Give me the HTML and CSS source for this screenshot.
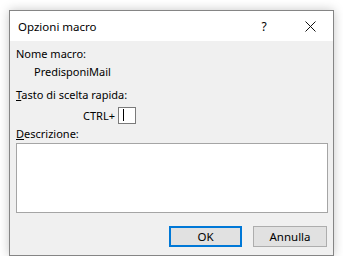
FILE: index.html
```html
<!DOCTYPE html>
<html lang="it">
<head>
    <meta charset="UTF-8">
    <title>Opzioni macro</title>
    <link rel="stylesheet" href="styles.css">
</head>
<body>
    <div class="dialog">
        <!-- Title bar -->
        <div class="titlebar">
            <span class="title">Opzioni macro</span>
            <span class="tb-btn help">?</span>
            <span class="tb-btn close">
                <svg width="11" height="11" viewBox="0 0 11 11">
                    <path d="M0.5 0.5 L10.5 10.5 M10.5 0.5 L0.5 10.5" stroke="#111" stroke-width="1" fill="none"/>
                </svg>
            </span>
        </div>

        <div class="content">
            <div class="label">Nome macro:</div>
            <div class="macro-name">PredisponiMail</div>

            <div class="label shortcut-label"><u>T</u>asto di scelta rapida:</div>
            <div class="shortcut-row">
                <span>CTRL+</span>
                <span class="key-box"><span class="caret"></span></span>
            </div>

            <div class="label desc-label"><u>D</u>escrizione:</div>
            <div class="desc-box"></div>

            <div class="buttons">
                <button class="btn default">OK</button>
                <button class="btn">Annulla</button>
            </div>
        </div>
    </div>
</body>
</html>
```

FILE: styles.css
```css
body {
    margin: 0;
    background: #fff;
    font-family: "Noto Sans", "Open Sans", sans-serif;
    font-size: 11px;
    color: #000;
}

.dialog {
    width: 323px;
    height: 244px;
    margin: 10px 0 0 9px;
    border: 1px solid #858585;
    background: #f0f0f0;
    box-shadow: 0 0 10px rgba(0, 0, 0, 0.22);
    display: flex;
    flex-direction: column;
}

.titlebar {
    height: 30px;
    background: #fff;
    display: flex;
    align-items: center;
}

.title {
    flex: 1;
    padding-left: 8px;
    font-size: 11.5px;
}

.tb-btn {
    width: 46px;
    height: 30px;
    display: flex;
    align-items: center;
    justify-content: center;
}

.help {
    font-size: 12px;
}

.content {
    flex: 1;
    padding: 5px 5px 0 6px;
    display: flex;
    flex-direction: column;
}

.label,
.macro-name,
.shortcut-row span {
    line-height: 16px;
}

.macro-name {
    margin-top: 2px;
    padding-left: 18px;
}

.shortcut-label {
    margin-top: 7px;
}

.shortcut-row {
    margin-top: 4px;
    padding-left: 67px;
    display: flex;
    align-items: center;
}

.key-box {
    width: 16px;
    height: 15px;
    margin-left: 3px;
    border: 1px solid #7a7a7a;
    background: #fff;
    position: relative;
}

.caret {
    position: absolute;
    left: 4px;
    top: 1px;
    width: 1px;
    height: 12px;
    background: #000;
}

.desc-label {
    margin-top: 2px;
}

.desc-box {
    margin-top: 1px;
    height: 68px;
    width: 310px;
    border: 1px solid #a5a5a5;
    background: #fff;
}

.buttons {
    margin-top: 13px;
    display: flex;
    justify-content: flex-end;
    gap: 11px;
    padding-right: 1px;
}

.btn {
    width: 74px;
    height: 21px;
    padding: 0;
    font-family: inherit;
    font-size: 11.5px;
    background: #e1e1e1;
    border: 1px solid #adadad;
    color: #000;
}

.btn.default {
    width: 73px;
    border: 2px solid #0078d7;
}
```
